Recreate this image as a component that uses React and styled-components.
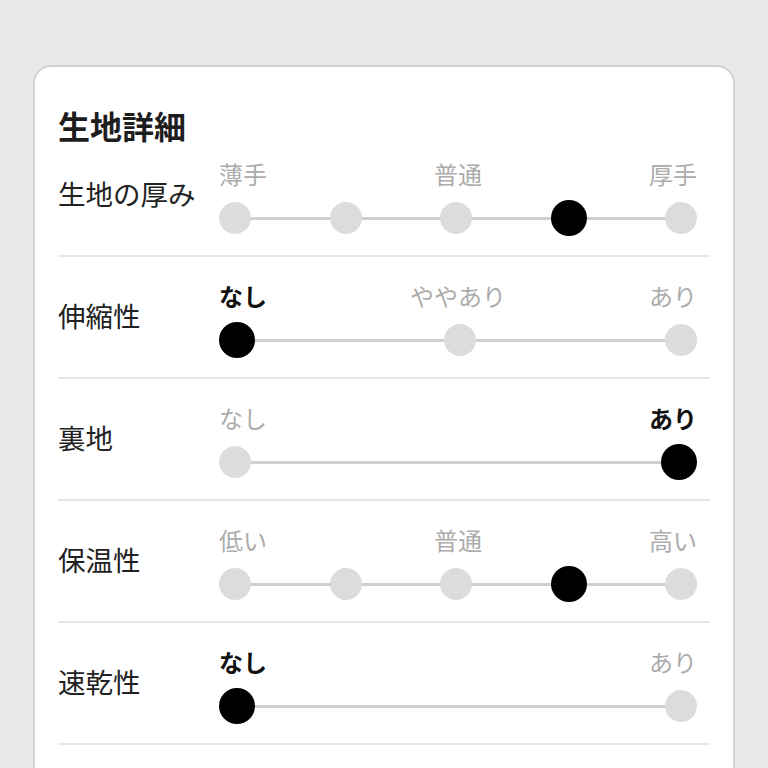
import React from "react";
import styled, { createGlobalStyle } from "styled-components";

const Global = createGlobalStyle`
  html, body { margin: 0; padding: 0; background: #e9e9e7; }
  body { font-family: "Noto Sans CJK JP", "Noto Sans", sans-serif; }
`;

const Page = styled.div`
  padding: 65px 33px 0 33px;
  height: 768px;
  box-sizing: border-box;
  overflow: hidden;
`;

const Card = styled.section`
  background: #fff;
  border: 2px solid #d3d3d3;
  border-radius: 18px;
  padding: 40px 23px 40px 23px;
`;

const Title = styled.h2`
  margin: 0;
  font-size: 32px;
  line-height: 36px;
  font-weight: 700;
  color: #1e1e1e;
`;

const Row = styled.div`
  display: grid;
  grid-template-columns: 161px 1fr;
  align-items: center;
  padding: 25px 13px 19px 0;
  border-bottom: 2px solid #e6e6e6;
  &:first-of-type { padding-top: 17px; }
`;

const Label = styled.div`
  font-size: 27.5px;
  color: #222;
  line-height: 1.2;
  margin-bottom: 10px;
`;

const Slider = styled.div`
  display: flex;
  flex-direction: column;
  gap: 12px;
`;

const Ticks = styled.div`
  display: grid;
  grid-template-columns: ${(p) => (p.$count === 3 ? "1fr 1fr 1fr" : "1fr 1fr")};
  height: 28px;
  align-items: center;
`;

const Tick = styled.span`
  font-size: 24px;
  line-height: 28px;
  white-space: nowrap;
  color: ${(p) => (p.$active ? "#111" : "#acacac")};
  font-weight: ${(p) => (p.$active ? 700 : 400)};
  text-align: ${(p) => p.$align};
`;

const Track = styled.div`
  position: relative;
  height: 36px;
  display: flex;
  justify-content: space-between;
  align-items: center;
  &::before {
    content: "";
    position: absolute;
    left: 16px;
    right: 16px;
    top: 50%;
    height: 3px;
    margin-top: -1.5px;
    background: #cfcfcf;
  }
`;

const Dot = styled.span`
  position: relative;
  width: ${(p) => (p.$active ? 36 : 32)}px;
  height: ${(p) => (p.$active ? 36 : 32)}px;
  border-radius: 50%;
  background: ${(p) => (p.$active ? "#000" : "#dcdcdc")};
  flex: none;
`;

const rows = [
  { label: "生地の厚み", ticks: ["薄手", "普通", "厚手"], points: 5, value: 3 },
  { label: "伸縮性", ticks: ["なし", "ややあり", "あり"], points: 3, value: 0 },
  { label: "裏地", ticks: ["なし", "あり"], points: 2, value: 1 },
  { label: "保温性", ticks: ["低い", "普通", "高い"], points: 5, value: 3 },
  { label: "速乾性", ticks: ["なし", "あり"], points: 2, value: 0 },
];

function tickActive(row, i) {
  const n = row.ticks.length;
  const pos = n === 1 ? 0 : Math.round((i * (row.points - 1)) / (n - 1));
  return pos === row.value;
}

function alignFor(i, n) {
  if (i === 0) return "left";
  if (i === n - 1) return "right";
  return "center";
}

export default function App() {
  return (
    <>
      <Global />
      <Page>
        <Card>
          <Title>生地詳細</Title>
          {rows.map((row) => (
            <Row key={row.label}>
              <Label>{row.label}</Label>
              <Slider>
                <Ticks $count={row.ticks.length}>
                  {row.ticks.map((t, i) => (
                    <Tick
                      key={t + i}
                      $align={alignFor(i, row.ticks.length)}
                      $active={tickActive(row, i)}
                    >
                      {t}
                    </Tick>
                  ))}
                </Ticks>
                <Track>
                  {Array.from({ length: row.points }).map((_, i) => (
                    <Dot key={i} $active={i === row.value} />
                  ))}
                </Track>
              </Slider>
            </Row>
          ))}
        </Card>
      </Page>
    </>
  );
}
